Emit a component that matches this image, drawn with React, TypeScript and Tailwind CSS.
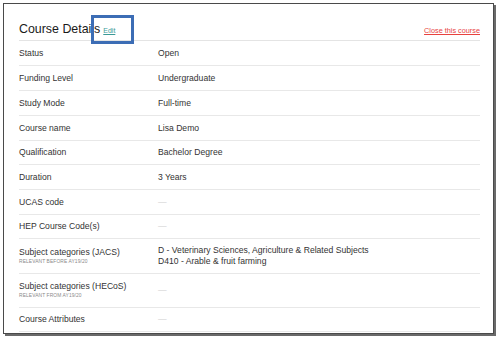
import React from "react";

type Row = { label: string; sub?: string; value?: string[]; h: number };

const rows: Row[] = [
  { label: "Status", value: ["Open"], h: 25 },
  { label: "Funding Level", value: ["Undergraduate"], h: 25 },
  { label: "Study Mode", value: ["Full-time"], h: 25 },
  { label: "Course name", value: ["Lisa Demo"], h: 25 },
  { label: "Qualification", value: ["Bachelor Degree"], h: 24 },
  { label: "Duration", value: ["3 Years"], h: 25 },
  { label: "UCAS code", h: 25 },
  { label: "HEP Course Code(s)", h: 24 },
  {
    label: "Subject categories (JACS)",
    sub: "Relevant before AY19/20",
    value: ["D - Veterinary Sciences, Agriculture & Related Subjects", "D410 - Arable & fruit farming"],
    h: 35,
  },
  { label: "Subject categories (HECoS)", sub: "Relevant from AY19/20", h: 34 },
  { label: "Course Attributes", h: 24 },
];

export default function App() {
  return (
    <div
      className="relative w-[500px] h-[340px] bg-white overflow-hidden"
      style={{ fontFamily: '"Liberation Sans", Arial, sans-serif' }}
    >
      <div className="ml-[3px] mt-[3px] w-[491px] h-[331px] border border-[#4a4a4a] shadow-[2px_2px_0_#6a6a6a] bg-white pl-[15px] pr-[13px] overflow-hidden">
        <div className="h-[37px] flex items-baseline justify-between border-b border-[#e4e4e4] pt-[17px]">
          <div className="flex items-baseline gap-[3px]">
            <span className="text-[12.4px] leading-[16px] text-[#1a1a1a]">Course Details</span>
            <span className="text-[7px] leading-[10px] text-[#3a9a96] underline">Edit</span>
          </div>
          <span className="text-[7.3px] leading-[10px] text-[#e8423f] underline">Close this course</span>
        </div>
        {rows.map((r) => (
          <div
            key={r.label}
            className="flex items-center border-b border-[#e8e8e8] text-[8.6px] text-[#333]"
            style={{ height: r.h }}
          >
            <div className="w-[139px] shrink-0 flex flex-col">
              <span className="leading-[11px]">{r.label}</span>
              {r.sub && (
                <span className="text-[4.9px] leading-[8px] uppercase tracking-[0.02em] text-[#8a8a8a]">
                  {r.sub}
                </span>
              )}
            </div>
            <div className="flex flex-col">
              {r.value ? (
                r.value.map((v) => (
                  <span key={v} className="leading-[11px]">
                    {v}
                  </span>
                ))
              ) : (
                <span className="leading-[11px] text-[#cfcfcf]">—</span>
              )}
            </div>
          </div>
        ))}
      </div>
      <div className="absolute left-[91px] top-[15px] w-[43px] h-[29px] border-[3px] border-[#3c6db5]" />
    </div>
  );
}
